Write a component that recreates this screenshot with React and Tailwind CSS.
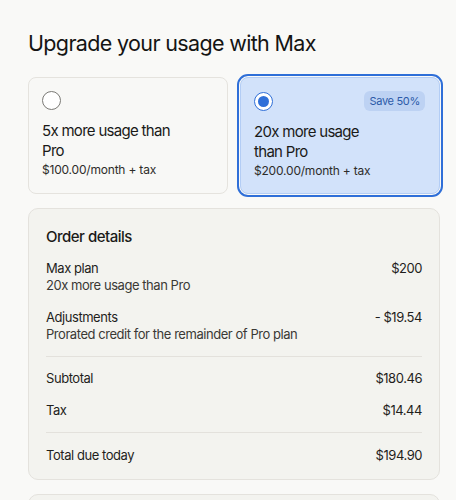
import React from "react";

function Radio({ checked }) {
  if (checked) {
    return (
      <div className="w-[19px] h-[19px] rounded-full border-[1.5px] border-[#2f6fd8] bg-white flex items-center justify-center shrink-0">
        <div className="w-[11px] h-[11px] rounded-full bg-[#2f6fd8]" />
      </div>
    );
  }
  return <div className="w-[19px] h-[19px] rounded-full border border-[#7a7975] bg-white shrink-0" />;
}

function Row({ label, sub, value }) {
  return (
    <div className="flex justify-between items-start text-[13px] leading-[17px] tracking-[-0.45px]">
      <div>
        <div className="text-[#1f1e1c]">{label}</div>
        {sub && <div className="text-[#3a3935]">{sub}</div>}
      </div>
      <div className="text-[#1f1e1c]">{value}</div>
    </div>
  );
}

export default function App() {
  return (
    <div
      className="min-h-[500px] bg-[#f9f9f7] pl-[28px] pt-[27px] overflow-hidden"
      style={{ fontFamily: "Inter, 'Liberation Sans', sans-serif" }}
    >
      <div className="w-[412px]">
        <h1 className="text-[21.5px] leading-[32px] text-[#141413] font-normal tracking-[-0.65px]">
          Upgrade your usage with Max
        </h1>

        <div className="grid grid-cols-2 gap-[12px] mt-[18px]">
          <div className="rounded-lg border border-[#e5e3de] bg-[#f8f8f6] px-[13px] pt-[13px] pb-[15px]">
            <div className="flex items-center h-[19px]">
              <Radio checked={false} />
            </div>
            <div className="mt-[11px] text-[15px] leading-[20px] tracking-[-0.7px] text-[#1a1a18] whitespace-nowrap">
              5x more usage than
              <br />
              Pro
            </div>
            <div className="mt-[1px] text-[12px] leading-[16px] tracking-[-0.2px] text-[#2e2d2a]">$100.00/month + tax</div>
          </div>

          <div className="rounded-lg border border-[#b3cdf5] bg-[#d2e2fa] outline-2 outline-offset-1 outline-[#2f6fd8] px-[13px] pt-[13px] pb-[14px]">
            <div className="flex items-center justify-between h-[20px]">
              <Radio checked={true} />
              <div className="h-[20px] px-[5px] mr-[1px] rounded-md bg-[#bdd2f3] text-[#2b5aa8] text-[11px] tracking-[-0.3px] leading-[20px]">
                Save 50%
              </div>
            </div>
            <div className="mt-[11px] text-[15px] leading-[20px] tracking-[-0.7px] text-[#1a1a18] whitespace-nowrap">
              20x more usage
              <br />
              than Pro
            </div>
            <div className="mt-[1px] text-[12px] leading-[16px] tracking-[-0.2px] text-[#2e2d2a]">$200.00/month + tax</div>
          </div>
        </div>

        <div className="mt-[14px] rounded-[10px] border border-[#e4e2dd] bg-[#f3f3ef] px-[17px] pt-[16px] pb-[15px]">
          <div className="text-[15px] leading-[24px] font-medium tracking-[-0.5px] text-[#1a1a18]">Order details</div>
          <div className="mt-[11px]">
            <Row label="Max plan" sub="20x more usage than Pro" value="$200" />
          </div>
          <div className="mt-[15px]">
            <Row label="Adjustments" sub="Prorated credit for the remainder of Pro plan" value="- $19.54" />
          </div>
          <div className="mt-[13px] h-px bg-[#e3e1dc]" />
          <div className="mt-[13px]">
            <Row label="Subtotal" value="$180.46" />
          </div>
          <div className="mt-[15px]">
            <Row label="Tax" value="$14.44" />
          </div>
          <div className="mt-[13px] h-px bg-[#e3e1dc]" />
          <div className="mt-[14px]">
            <Row label="Total due today" value="$194.90" />
          </div>
        </div>

        <div className="mt-[14px] h-[40px] rounded-t-[10px] border border-[#e4e2dd] bg-[#f3f3ef]" />
      </div>
    </div>
  );
}
